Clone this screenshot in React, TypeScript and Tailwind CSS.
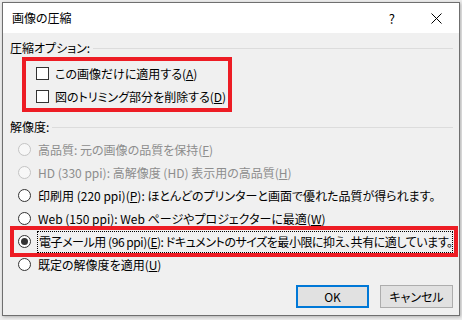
import type { ReactNode } from "react";

const font = "font-['Noto_Sans_CJK_JP','Noto_Sans',sans-serif] [font-feature-settings:'palt']";

function GroupHeader({ label }: { label: string }) {
  return (
    <div className="flex h-[16px] items-center pl-[7px] pr-[6px]">
      <span className="text-[12px] leading-none text-black">{label}</span>
      <div className="ml-[3px] h-px flex-1 bg-[#dcdcdc]" />
    </div>
  );
}

function Check({ children }: { children: ReactNode }) {
  return (
    <div className="flex h-[23px] items-center">
      <div className="h-[13px] w-[13px] border border-[#333] bg-white" />
      <span className="ml-[6px] whitespace-nowrap text-[12px] leading-none text-black">{children}</span>
    </div>
  );
}

function Radio({
  children,
  disabled,
  checked,
  focused,
}: {
  children: ReactNode;
  disabled?: boolean;
  checked?: boolean;
  focused?: boolean;
}) {
  return (
    <div className="flex h-[23px] items-center">
      <div
        className={
          disabled
            ? "flex h-[13px] w-[13px] shrink-0 items-center justify-center rounded-full border border-[#c4c4c4] bg-[#f7f7f7]"
            : "flex h-[13px] w-[13px] shrink-0 items-center justify-center rounded-full border border-[#333] bg-white"
        }
      >
        {checked && <div className="h-[7px] w-[7px] rounded-full bg-[#333]" />}
      </div>
      {focused ? (
        <div className="ml-[6px] flex h-[22px] min-w-0 flex-1 items-center overflow-hidden border border-dotted border-black pl-px">
          <span className="whitespace-nowrap text-[12px] leading-none tracking-[-0.45px] text-black">{children}</span>
        </div>
      ) : (
        <span
          className={
            disabled
              ? "ml-[7px] whitespace-nowrap text-[12px] leading-none text-[#8d8d8d]"
              : "ml-[7px] whitespace-nowrap text-[12px] leading-none text-black"
          }
        >
          {children}
        </span>
      )}
    </div>
  );
}

export default function App() {
  return (
    <div className={`h-[320px] w-[462px] bg-[#ececec] pl-[2px] pt-[2px] ${font}`}>
      <div className="flex h-[314px] w-[458px] flex-col border border-[#6f6f6f] bg-[#f0f0f0] shadow-[1px_1px_3px_rgba(0,0,0,0.25)]">
        {/* title bar */}
        <div className="flex h-[30px] items-center bg-white pl-[9px]">
          <span className="text-[12px] leading-none text-black">画像の圧縮</span>
          <span className="ml-auto text-[13px] leading-none text-black">?</span>
          <svg className="ml-[36px] mr-[17px]" width="11" height="11" viewBox="0 0 11 11">
            <path d="M0.5 0.5 L10.5 10.5 M10.5 0.5 L0.5 10.5" stroke="#000" strokeWidth="1" />
          </svg>
        </div>

        <div className="flex flex-1 flex-col">
          <div className="mt-[7px]">
            <GroupHeader label="圧縮オプション:" />
          </div>

          <div className="ml-[19px] mt-px w-[210px] border-4 border-[#ed1c24] pl-[10px] pt-px">
            <Check>
              この画像だけに適用する(<u>A</u>)
            </Check>
            <Check>
              図のトリミング部分を削除する(<u>D</u>)
            </Check>
          </div>

          <div className="mt-[7px]">
            <GroupHeader label="解像度:" />
          </div>

          <div className="mt-[3px] flex flex-col">
            <div className="ml-[15px]">
              <Radio disabled>
                高品質: 元の画像の品質を保持(<u>F</u>)
              </Radio>
              <Radio disabled>
                HD (330 ppi): 高解像度 (HD) 表示用の高品質(<u>H</u>)
              </Radio>
              <Radio>
                印刷用 (220 ppi)(<u>P</u>): ほとんどのプリンターと画面で優れた品質が得られます。
              </Radio>
              <Radio>
                Web (150 ppi): Web ページやプロジェクターに最適(<u>W</u>)
              </Radio>
            </div>
            <div className="relative -my-[4px] ml-[7px] mr-px border-4 border-[#ed1c24] pl-[4px] pr-px">
              <Radio checked focused>
                電子メール用 (96 ppi)(<u>E</u>): ドキュメントのサイズを最小限に抑え、共有に適しています。
              </Radio>
            </div>
            <div className="ml-[15px]">
              <Radio>
                既定の解像度を適用(<u>U</u>)
              </Radio>
            </div>
          </div>

          <div className="mr-[6px] mt-[9px] flex justify-end gap-[11px]">
            <button className="flex h-[23px] w-[73px] items-center justify-center border-2 border-[#0078d7] bg-[#e1e1e1] text-[12px] leading-none text-black">
              OK
            </button>
            <button className="flex h-[23px] w-[73px] items-center justify-center border border-[#adadad] bg-[#e1e1e1] text-[12px] leading-none text-black">
              キャンセル
            </button>
          </div>
        </div>
      </div>
    </div>
  );
}
